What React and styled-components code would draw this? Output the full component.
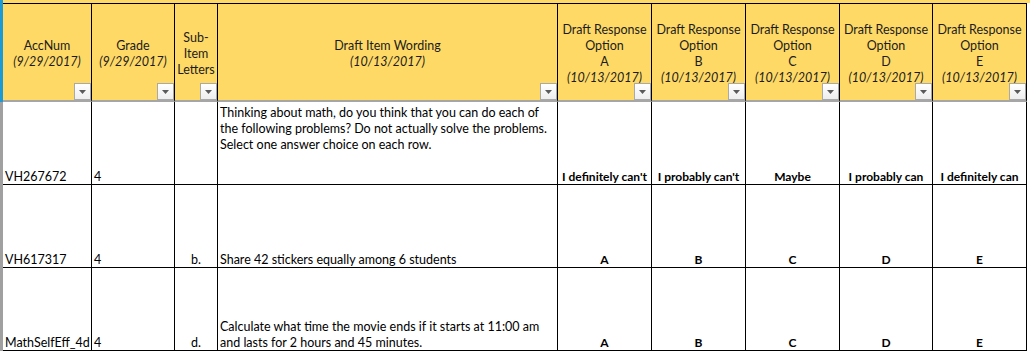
import React from "react";
import styled, { createGlobalStyle } from "styled-components";

const COLS = "3px 89px 83px 43px 340px 94px 94px 94px 93px 94px 3px";
const HEAD_BG = "#ffd966";

const GlobalStyle = createGlobalStyle`
  html, body { margin: 0; padding: 0; background: #ffffff; }
  body {
    font-family: Lato, "Liberation Sans", sans-serif;
    font-size: 12.5px;
    color: #000;
  }
`;

const Sheet = styled.div`
  width: 1030px;
  display: flex;
  flex-direction: column;
`;

const Row = styled.div`
  display: grid;
  grid-template-columns: ${COLS};
  height: ${(p) => p.$h}px;
`;

const Gutter = styled.div`
  background: ${(p) => p.$color};
`;

const TitleStrip = styled.div`
  grid-column: 2 / 12;
  background: ${HEAD_BG};
`;

const HeadCell = styled.div`
  position: relative;
  background: ${HEAD_BG};
  border-top: 1px solid #000;
  border-right: 1px solid #000;
  border-bottom: 2px solid #a6a6a6;
  display: flex;
  flex-direction: column;
  align-items: center;
  justify-content: center;
  padding-top: 3px;
  text-align: center;
  line-height: 16px;
  color: #1c1c1c;
`;

const HeadLine = styled.span`
  white-space: nowrap;
  font-style: ${(p) => (p.$italic ? "italic" : "normal")};
`;

const FilterButton = styled.div`
  position: absolute;
  right: 0;
  bottom: 0;
  width: 17px;
  height: 17px;
  box-sizing: border-box;
  border: 1px solid #a9a9a9;
  background: linear-gradient(#ffffff, #eeeeee);
  display: flex;
  align-items: center;
  justify-content: center;
`;

const Blank = styled.div`
  background: #fff;
`;

const BodyCell = styled.div`
  border-right: 1px solid #000;
  border-bottom: 1px solid #000;
  display: flex;
  flex-direction: column;
  justify-content: ${(p) => (p.$top ? "flex-start" : "flex-end")};
  align-items: ${(p) =>
    p.$align === "center" ? "center" : "flex-start"};
  padding: ${(p) => (p.$top ? "3px 2px 0" : "0 2px")};
  line-height: 16px;
  overflow: hidden;
`;

const CellText = styled.span`
  white-space: nowrap;
  font-size: ${(p) => (p.$bold ? "12px" : "12.5px")};
  font-weight: ${(p) => (p.$bold ? 700 : 400)};
  margin-bottom: ${(p) => (p.$top ? "0" : "-1px")};
  text-align: ${(p) => (p.$align === "center" ? "center" : "left")};
`;

const Arrow = () => (
  <svg width="7" height="4" viewBox="0 0 7 4">
    <path d="M0 0 H7 L3.5 4 Z" fill="#5a5a5a" />
  </svg>
);

const headers = [
  ["AccNum", "(9/29/2017)"],
  ["Grade", "(9/29/2017)"],
  ["Sub-", "Item", "Letters"],
  ["Draft Item Wording", "(10/13/2017)"],
  ["Draft Response", "Option", "A", "(10/13/2017)"],
  ["Draft Response", "Option", "B", "(10/13/2017)"],
  ["Draft Response", "Option", "C", "(10/13/2017)"],
  ["Draft Response", "Option", "D", "(10/13/2017)"],
  ["Draft Response", "Option", "E", "(10/13/2017)"],
];

const rows = [
  {
    acc: "VH267672",
    grade: "4",
    sub: "",
    top: true,
    wording: [
      "Thinking about math, do you think that you can do each of",
      "the following problems? Do not actually solve the problems.",
      "Select one answer choice on each row.",
    ],
    opts: [
      "I definitely can't",
      "I probably can't",
      "Maybe",
      "I probably can",
      "I definitely can",
    ],
  },
  {
    acc: "VH617317",
    grade: "4",
    sub: "b.",
    wording: ["Share 42 stickers equally among 6 students"],
    opts: ["A", "B", "C", "D", "E"],
  },
  {
    acc: "MathSelfEff_4d",
    grade: "4",
    sub: "d.",
    wording: [
      "Calculate what time the movie ends if it starts at 11:00 am",
      "and lasts for 2 hours and 45 minutes.",
    ],
    opts: ["A", "B", "C", "D", "E"],
  },
];

export default function App() {
  return (
    <>
      <GlobalStyle />
      <Sheet>
        <Row $h={3}>
          <Gutter $color="#1b9ad6" />
          <TitleStrip />
        </Row>
        <Row $h={99}>
          <Gutter $color="#1b9ad6" />
          {headers.map((lines, i) => (
            <HeadCell key={i}>
              {lines.map((l, j) => (
                <HeadLine key={j} $italic={l.startsWith("(")}>
                  {l}
                </HeadLine>
              ))}
              <FilterButton>
                <Arrow />
              </FilterButton>
            </HeadCell>
          ))}
          <Blank />
        </Row>
        {rows.map((r, i) => (
          <Row $h={83} key={i}>
            <Gutter $color="#a0a0a0" />
            <BodyCell>
              <CellText>{r.acc}</CellText>
            </BodyCell>
            <BodyCell>
              <CellText>{r.grade}</CellText>
            </BodyCell>
            <BodyCell $align="center">
              <CellText $align="center">{r.sub}</CellText>
            </BodyCell>
            <BodyCell $top={r.top}>
              <CellText $top={r.top}>
                {r.wording.map((w, k) => (
                  <React.Fragment key={k}>
                    {k > 0 && <br />}
                    {w}
                  </React.Fragment>
                ))}
              </CellText>
            </BodyCell>
            {r.opts.map((o, k) => (
              <BodyCell $align="center" key={k}>
                <CellText $bold $align="center">
                  {o}
                </CellText>
              </BodyCell>
            ))}
            <Blank />
          </Row>
        ))}
      </Sheet>
    </>
  );
}
